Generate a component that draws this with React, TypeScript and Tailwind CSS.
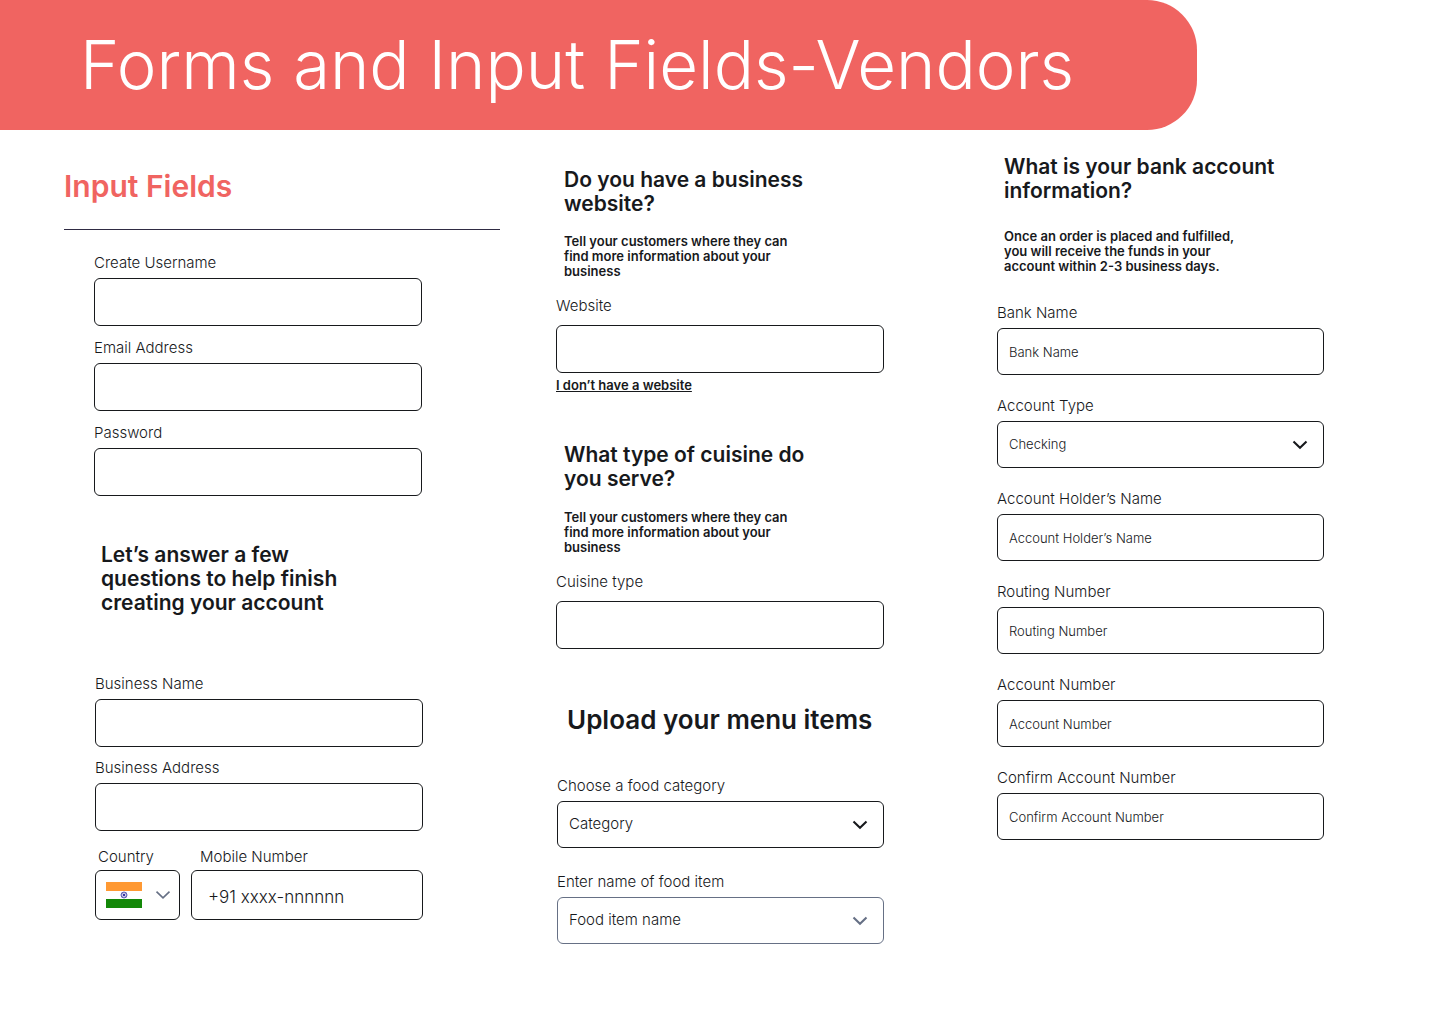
import { useState } from "react";

type FieldProps = {
  id: string;
  label: string;
  type?: string;
  placeholder?: string;
  small?: boolean;
  wide?: boolean;
};

type SelectProps = {
  id: string;
  label: string;
  options: Array<string>;
  muted?: boolean;
  small?: boolean;
};

const Chevron = ({ muted, thin }: { muted?: boolean; thin?: boolean }) => (
  <svg
    width="16"
    height="10"
    viewBox="0 0 16 10"
    fill="none"
    stroke={muted ? "#667085" : "#17191c"}
    strokeWidth={thin ? "1.6" : "2.1"}
    aria-hidden="true"
  >
    <path d="M1.5 1.6L8 7.8L14.5 1.6" />
  </svg>
);

const IndiaFlag = () => (
  <svg width="36" height="26" viewBox="0 0 36 26" aria-hidden="true">
    <rect width="36" height="26" fill="#fff" />
    <rect width="36" height="9" fill="#ff9933" />
    <rect y="17" width="36" height="9" fill="#138808" />
    <g stroke="#000088" fill="none">
      <circle cx="18" cy="13" r="3" strokeWidth="0.6" />
      <path
        d="M15 13H21M18 10V16M15.9 10.9L20.1 15.1M20.1 10.9L15.9 15.1"
        strokeWidth="0.4"
      />
    </g>
    <circle cx="18" cy="13" r="0.8" fill="#000088" />
  </svg>
);

const Field = ({ id, label, type = "text", placeholder, small, wide }: FieldProps) => (
  <div className={wide ? "flex flex-col gap-[9px]" : "flex flex-col gap-[5px]"}>
    <label htmlFor={id} className="text-[15px] leading-5 font-light">
      {label}
    </label>
    <input
      id={id}
      type={type}
      placeholder={placeholder}
      className={
        small
          ? "h-[47px] w-full rounded-md border border-[#17191c] px-[11px] text-[13px] font-light placeholder:text-[#17191c]"
          : "h-12 w-full rounded-md border border-[#17191c] px-[11px] text-[15px] font-light"
      }
    />
  </div>
);

const SelectField = ({ id, label, options, muted, small }: SelectProps) => {
  const [value, setValue] = useState(options[0]);
  return (
    <div className="flex flex-col gap-[5px]">
      <label htmlFor={id} className="text-[15px] leading-5 font-light">
        {label}
      </label>
      <div className="relative">
        <select
          id={id}
          value={value}
          onChange={(e) => setValue(e.target.value)}
          className={`block h-[47px] w-full appearance-none rounded-md border bg-white px-[11px] font-light ${
            muted ? "border-[#667085]" : "border-[#17191c]"
          } ${small ? "text-[13px]" : "text-[15px]"}`}
        >
          {options.map((el) => (
            <option key={el}>{el}</option>
          ))}
        </select>
        <span className="pointer-events-none absolute inset-y-0 right-4 flex items-center">
          <Chevron muted={muted} />
        </span>
      </div>
    </div>
  );
};

const App = () => {
  return (
    <div className="bg-white pb-20 font-['Inter',sans-serif] text-[#17191c]">
      <header className="mr-[243px] rounded-r-[50px] bg-[#f06461] py-[33px] pl-20">
        <h1 className="text-[67px] leading-[64px] font-light whitespace-nowrap text-white">
          Forms and Input Fields-Vendors
        </h1>
      </header>

      <main className="grid grid-cols-[492fr_441fr_327fr] pr-[116px] pl-16">
        <div className="pt-[38px] pr-14">
          <h2 className="border-b border-[#2f2b43] pb-[25px] text-[30px] leading-9 font-semibold text-[#f06461]">
            Input Fields
          </h2>
          <form className="flex flex-col gap-3 pt-[23px] pr-[78px] pl-[30px]">
            <Field id="username" label="Create Username" />
            <Field id="email" label="Email Address" type="email" />
            <Field id="password" label="Password" type="password" />
          </form>

          <form className="flex flex-col gap-[11px] pt-[47px] pr-[77px] pl-[31px]">
            <h3 className="mb-12 pl-1.5 text-[21px] leading-6 font-semibold">
              Let’s answer a few
              <br />
              questions to help finish
              <br />
              creating your account
            </h3>
            <Field id="business-name" label="Business Name" />
            <Field id="business-address" label="Business Address" />
            <div className="flex gap-[11px] pt-[5px]">
              <div className="flex w-[85px] flex-col gap-[3px]">
                <label htmlFor="country" className="pl-[3px] text-[15px] leading-5 font-light">
                  Country
                </label>
                <div className="relative">
                  <select
                    id="country"
                    className="block h-[50px] w-full appearance-none rounded-md border border-[#17191c] bg-white text-transparent"
                  >
                    <option value="IN" aria-label="India"></option>
                  </select>
                  <span className="pointer-events-none absolute inset-0 flex items-center justify-between pr-[9px] pl-[11px]">
                    <IndiaFlag />
                    <Chevron muted thin />
                  </span>
                </div>
              </div>
              <div className="flex min-w-0 flex-1 flex-col gap-[3px]">
                <label htmlFor="mobile" className="pl-[9px] text-[15px] leading-5 font-light">
                  Mobile Number
                </label>
                <input
                  id="mobile"
                  type="tel"
                  placeholder="+91 xxxx-nnnnnn"
                  className="h-[50px] w-full rounded-md border border-[#17191c] px-4 pt-1 text-[17px] font-light placeholder:text-[#17191c]"
                />
              </div>
            </div>
          </form>
        </div>

        <div className="pt-[38px] pr-[113px]">
          <section>
            <h3 className="pl-2 text-[21px] leading-6 font-semibold">
              Do you have a business
              <br />
              website?
            </h3>
            <p className="pt-[18px] pb-[17px] pl-2 text-[13px] leading-[15px] font-semibold">
              Tell your customers where they can
              <br />
              find more information about your
              <br />
              business
            </p>
            <Field id="website" label="Website" wide />
            <a
              href="#cuisine"
              className="mt-1 block text-[13px] leading-4 font-semibold underline decoration-1"
            >
              I don’t have a website
            </a>
          </section>

          <section className="pt-[50px]">
            <h3 className="pl-2 text-[21px] leading-6 font-semibold">
              What type of cuisine do
              <br />
              you serve?
            </h3>
            <p className="pt-[19px] pb-[17px] pl-2 text-[13px] leading-[15px] font-semibold">
              Tell your customers where they can
              <br />
              find more information about your
              <br />
              business
            </p>
            <Field id="cuisine" label="Cuisine type" wide />
          </section>

          <section className="flex flex-col gap-6 pt-[55px] pl-px">
            <h3 className="mb-4 pl-2.5 text-[26px] leading-8 font-semibold whitespace-nowrap">
              Upload your menu items
            </h3>
            <SelectField id="category" label="Choose a food category" options={["Category"]} />
            <SelectField
              id="food-item"
              label="Enter name of food item"
              options={["Food item name"]}
              muted
            />
          </section>
        </div>

        <form className="flex flex-col gap-[21px] pt-[25px]">
          <div className="pb-2 pl-[7px]">
            <h3 className="text-[21px] leading-6 font-semibold whitespace-nowrap">
              What is your bank account
              <br />
              information?
            </h3>
            <p className="pt-[26px] text-[13px] leading-[15px] font-semibold">
              Once an order is placed and fulfilled,
              <br />
              you will receive the funds in your
              <br />
              account within 2-3 business days.
            </p>
          </div>
          <Field id="bank" label="Bank Name" placeholder="Bank Name" small />
          <SelectField
            id="account-type"
            label="Account Type"
            options={["Checking", "Savings"]}
            small
          />
          <Field id="holder" label="Account Holder’s Name" placeholder="Account Holder’s Name" small />
          <Field id="routing" label="Routing Number" placeholder="Routing Number" small />
          <Field id="account" label="Account Number" placeholder="Account Number" small />
          <Field
            id="confirm"
            label="Confirm Account Number"
            placeholder="Confirm Account Number"
            small
          />
        </form>
      </main>
    </div>
  );
};
export default App;
